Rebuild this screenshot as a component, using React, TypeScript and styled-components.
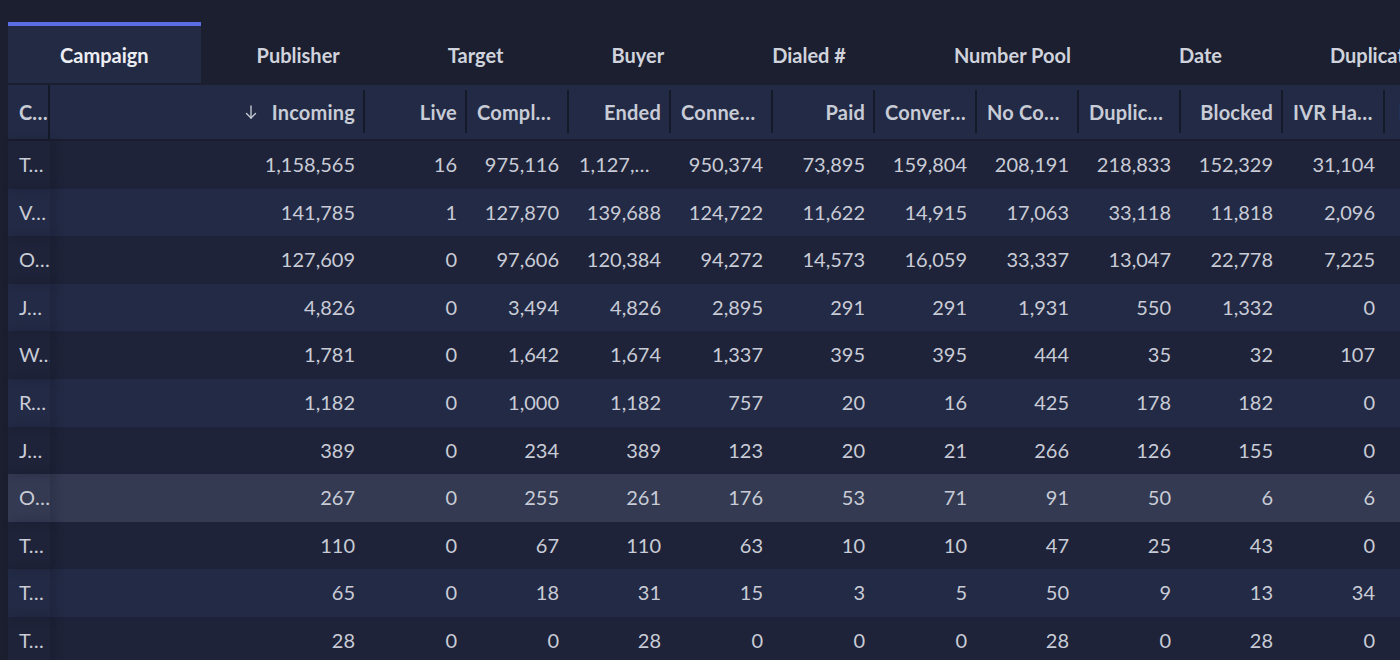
import React from "react";
import styled, { createGlobalStyle } from "styled-components";

const GlobalStyle = createGlobalStyle`
  html, body {
    margin: 0;
    padding: 0;
    background: #1b1f30;
    font-family: Lato, "Noto Sans", sans-serif;
  }
`;

type Align = "left" | "right";

interface Column {
  title: string;
  align: Align;
  width: number;
  sorted?: boolean;
}

const tabs = [
  "Campaign",
  "Publisher",
  "Target",
  "Buyer",
  "Dialed #",
  "Number Pool",
  "Date",
  "Duplicate",
];

const columns: Column[] = [
  { title: "Incoming", align: "right", width: 315, sorted: true },
  { title: "Live", align: "right", width: 102 },
  { title: "Completed", align: "left", width: 102 },
  { title: "Ended", align: "right", width: 102 },
  { title: "Connected", align: "left", width: 102 },
  { title: "Paid", align: "right", width: 102 },
  { title: "Converted", align: "left", width: 102 },
  { title: "No Connect", align: "left", width: 102 },
  { title: "Duplicate", align: "left", width: 102 },
  { title: "Blocked", align: "right", width: 102 },
  { title: "IVR Handled", align: "left", width: 102 },
  { title: "Revenue", align: "right", width: 102 },
];

const rows: { name: string; values: string[] }[] = [
  { name: "Tax Relief", values: ["1,158,565", "16", "975,116", "1,127,283", "950,374", "73,895", "159,804", "208,191", "218,833", "152,329", "31,104", "$0"] },
  { name: "Vehicle Insurance", values: ["141,785", "1", "127,870", "139,688", "124,722", "11,622", "14,915", "17,063", "33,118", "11,818", "2,096", "$0"] },
  { name: "Obamacare", values: ["127,609", "0", "97,606", "120,384", "94,272", "14,573", "16,059", "33,337", "13,047", "22,778", "7,225", "$0"] },
  { name: "Jobs Line", values: ["4,826", "0", "3,494", "4,826", "2,895", "291", "291", "1,931", "550", "1,332", "0", "$0"] },
  { name: "Water Damage", values: ["1,781", "0", "1,642", "1,674", "1,337", "395", "395", "444", "35", "32", "107", "$0"] },
  { name: "Roofing", values: ["1,182", "0", "1,000", "1,182", "757", "20", "16", "425", "178", "182", "0", "$0"] },
  { name: "Junk Removal", values: ["389", "0", "234", "389", "123", "20", "21", "266", "126", "155", "0", "$0"] },
  { name: "Overdraft", values: ["267", "0", "255", "261", "176", "53", "71", "91", "50", "6", "6", "$0"] },
  { name: "Truck Accident", values: ["110", "0", "67", "110", "63", "10", "10", "47", "25", "43", "0", "$0"] },
  { name: "Travel", values: ["65", "0", "18", "31", "15", "3", "5", "50", "9", "13", "34", "$0"] },
  { name: "Tree Service", values: ["28", "0", "0", "28", "0", "0", "0", "28", "0", "28", "0", "$0"] },
];

const gridTemplate = `42px ${columns.map((c) => `${c.width}px`).join(" ")}`;

const ArrowDown = () => (
  <svg width="18" height="18" viewBox="0 0 24 24" fill="none" stroke="currentColor" strokeWidth="1.8" strokeLinecap="round" strokeLinejoin="round">
    <path d="M12 4v16" />
    <path d="M6 14l6 6 6-6" />
  </svg>
);

const App: React.FC = () => {
  return (
    <>
      <GlobalStyle />
      <Page>
        <TabBar>
          {tabs.map((t, i) => (
            <Tab key={t} $active={i === 0}>
              {t}
            </Tab>
          ))}
        </TabBar>
        <Table>
          <HeaderRow>
            <PinnedHeadCell>Campaign</PinnedHeadCell>
            {columns.map((c) => (
              <HeadCell key={c.title} $align={c.align}>
                {c.sorted && (
                  <SortIcon>
                    <ArrowDown />
                  </SortIcon>
                )}
                <HeadLabel>{c.title}</HeadLabel>
              </HeadCell>
            ))}
          </HeaderRow>
          {rows.map((r, i) => (
            <Row key={i} $striped={i % 2 === 1} $hover={i === 7}>
              <PinnedCell>{r.name}</PinnedCell>
              {r.values.map((v, j) => (
                <Cell key={j}>{v}</Cell>
              ))}
            </Row>
          ))}
        </Table>
      </Page>
    </>
  );
};

export default App;

const Page = styled.div`
  width: 1400px;
  height: 660px;
  overflow: hidden;
  box-sizing: border-box;
  padding: 22px 0 0 8px;
  background: #1b1f30;
`;

const TabBar = styled.div`
  display: flex;
  gap: 4px;
  height: 61px;
`;

const Tab = styled.div<{ $active?: boolean }>`
  flex: none;
  display: flex;
  align-items: center;
  box-sizing: border-box;
  height: 100%;
  padding: 0 52px;
  border-top: 4px solid ${({ $active }) => ($active ? "#5b6ee6" : "transparent")};
  background: ${({ $active }) => ($active ? "#232a43" : "transparent")};
  color: ${({ $active }) => ($active ? "#eceef4" : "#d0d3dc")};
  font-size: 20px;
  font-weight: 700;
  white-space: nowrap;
`;

const Table = styled.div`
  margin-top: 2px;
  width: max-content;
`;

const HeaderRow = styled.div`
  display: grid;
  grid-template-columns: ${gridTemplate};
  height: 54px;
  background: #222a45;
  border-bottom: 2px solid #191d2d;
`;

const HeadCell = styled.div<{ $align: Align }>`
  position: relative;
  display: flex;
  align-items: center;
  justify-content: ${({ $align }) => ($align === "right" ? "flex-end" : "flex-start")};
  min-width: 0;
  padding: 0 10px;
  color: #c8ccd6;
  font-size: 20px;
  font-weight: 700;
  letter-spacing: 0.2px;

  &::after {
    content: "";
    position: absolute;
    right: 0;
    top: 5px;
    bottom: 6px;
    width: 2px;
    background: #151a29;
  }
`;

const HeadLabel = styled.span`
  overflow: hidden;
  white-space: nowrap;
  text-overflow: ellipsis;
`;

const SortIcon = styled.span`
  display: flex;
  flex: none;
  margin-right: 12px;
  color: #c8ccd6;
`;

const PinnedHeadCell = styled.div`
  display: block;
  min-width: 0;
  padding: 0 4px 0 11px;
  border-right: 2px solid #151a29;
  color: #c8ccd6;
  font-size: 20px;
  font-weight: 700;
  line-height: 54px;
  overflow: hidden;
  white-space: nowrap;
  text-overflow: ellipsis;
`;

const Row = styled.div<{ $striped?: boolean; $hover?: boolean }>`
  display: grid;
  grid-template-columns: ${gridTemplate};
  height: 47.6px;
  background: ${({ $striped, $hover }) =>
    $hover ? "#333a52" : $striped ? "#232a45" : "#1e2339"};
`;

const Cell = styled.div`
  min-width: 0;
  padding: 0 10px;
  line-height: 47.6px;
  text-align: right;
  color: #c9ccd6;
  font-size: 20px;
  overflow: hidden;
  white-space: nowrap;
  text-overflow: ellipsis;
`;

const PinnedCell = styled(Cell)`
  position: relative;
  z-index: 1;
  padding: 0 4px 0 11px;
  text-align: left;
  box-shadow: 4px 0 10px rgba(10, 12, 24, 0.18);
`;
